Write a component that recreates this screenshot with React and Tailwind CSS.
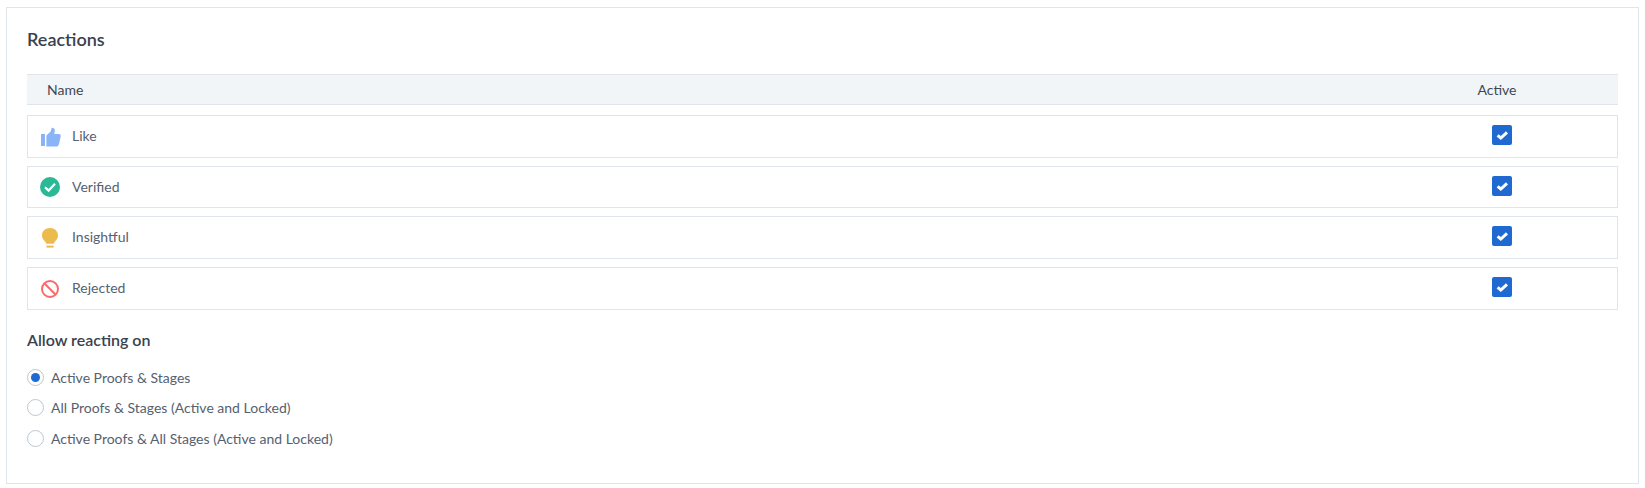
import React from "react";

function Check() {
  return (
    <span className="flex h-5 w-5 items-center justify-center rounded-[2px] bg-[#1f69d1]">
      <svg width="20" height="20" viewBox="0 0 20 20" fill="none">
        <path d="M5.6 10.3 L8.8 13 L15 7.4" stroke="#fff" strokeWidth="3" />
      </svg>
    </span>
  );
}

const Like = () => (
  <svg width="20" height="20" viewBox="0 0 20 20" fill="#8ab4f8" className="overflow-visible">
    <rect x="1" y="7" width="4" height="12" />
    <path d="M6.4 8.6 L10.6 4.4 L11.8 0.8 C14 0.8 15.2 2 14.8 4.2 L14.2 7 L19 7 C20.4 7 20.9 8 20.7 9.4 L19 17 C18.6 18.6 17.6 19.6 16 19.6 L6.4 19.6 Z" />
  </svg>
);

const Verified = () => (
  <svg width="20" height="20" viewBox="0 0 20 20">
    <circle cx="10" cy="10" r="10" fill="#2bb895" />
    <path d="M5 10.2 L8.6 13.6 L15 6.8" fill="none" stroke="#fff" strokeWidth="2.2" />
  </svg>
);

const Bulb = () => (
  <svg width="20" height="20" viewBox="0 0 20 20" fill="#ecbb4d">
    <path d="M10 0 C14.6 0 18 3.2 18 7.4 C18 10.2 16.4 11.8 15 13.4 C14.2 14.4 13.8 15 13.6 15.8 L6.4 15.8 C6.2 15 5.8 14.4 5 13.4 C3.6 11.8 2 10.2 2 7.4 C2 3.2 5.4 0 10 0 Z" />
    <rect x="6.4" y="17.6" width="7.2" height="2" />
  </svg>
);

const Rejected = () => (
  <svg width="20" height="20" viewBox="0 0 20 20" fill="none" stroke="#fb6a6a" strokeWidth="2">
    <circle cx="10" cy="10" r="8" />
    <path d="M4.3 4.3 L15.7 15.7" />
  </svg>
);

const rows = [
  { name: "Like", Icon: Like, cls: "h-[43px] mb-2" },
  { name: "Verified", Icon: Verified, cls: "h-[42px] mb-2" },
  { name: "Insightful", Icon: Bulb, cls: "h-[43px] mb-2" },
  { name: "Rejected", Icon: Rejected, cls: "h-[43px]" },
];

const options = [
  { label: "Active Proofs & Stages", on: true, cls: "" },
  { label: "All Proofs & Stages (Active and Locked)", on: false, cls: "mt-[13px]" },
  { label: "Active Proofs & All Stages (Active and Locked)", on: false, cls: "mt-[14px]" },
];

export default function App() {
  return (
    <div className="h-[488px] w-[1645px] overflow-hidden bg-white pt-[7px] pl-[6px] font-['Lato','Noto_Sans',sans-serif] text-[14px] text-[#566170]">
      <div className="h-[477px] w-[1633px] border border-[#dfe5eb] pt-[19px] pl-5 pr-5">
        <h2 className="text-[18px] leading-[24px] font-semibold text-[#39424e]">Reactions</h2>
        <div className="mt-[23px] flex h-[31px] items-center justify-between border-y border-[#dfe5eb] bg-[#f2f5f8] pl-5 text-[#3f4853]">
          <span>Name</span>
          <span className="mr-[101px] w-[40px] text-center">Active</span>
        </div>
        <div className="mt-[10px] flex flex-col">
          {rows.map(({ name, Icon, cls }) => (
            <div key={name} className={`relative flex items-center border border-[#dfe5eb] pl-3 ${cls}`}>
              <Icon />
              <span className="ml-[12px] -translate-y-px">{name}</span>
              <span className="absolute right-[105px] top-[9px]"><Check /></span>
            </div>
          ))}
        </div>
        <h3 className="mt-[19px] text-[16px] leading-[22px] font-semibold text-[#39424e]">Allow reacting on</h3>
        <div className="mt-[18px] flex flex-col">
          {options.map((o) => (
            <label key={o.label} className={`flex h-[17px] items-center ${o.cls}`}>
              <span className="flex h-[17px] w-[17px] items-center justify-center rounded-full border border-[#bcc6d2] bg-white">
                {o.on && <span className="h-[9px] w-[9px] rounded-full bg-[#1f69d1]" />}
              </span>
              <span className="ml-[7px]">{o.label}</span>
            </label>
          ))}
        </div>
      </div>
    </div>
  );
}
